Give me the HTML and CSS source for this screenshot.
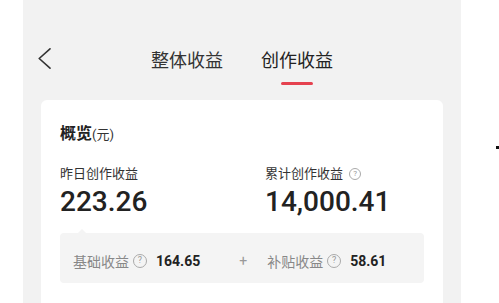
FILE: index.html
```html
<!DOCTYPE html>
<html lang="zh-CN">
<head>
    <meta charset="UTF-8">
    <meta name="viewport" content="width=device-width, initial-scale=1.0">
    <title>创作收益</title>
    <link rel="stylesheet" href="styles.css">
</head>
<body>
    <div class="gutter"></div>

    <div class="panel">
        <!-- 顶部导航 -->
        <div class="topbar">
            <div class="back">
                <svg width="13" height="21" viewBox="0 0 13 21">
                    <polyline points="12,0.8 1.2,10.5 12,20.2" fill="none" stroke="#333" stroke-width="1.6" stroke-linejoin="round" stroke-linecap="round"/>
                </svg>
            </div>
            <div class="tabs">
                <div class="tab">整体收益</div>
                <div class="tab active">创作收益</div>
            </div>
            <div></div>
        </div>

        <div class="card">
            <div class="card-title">概览<span class="unit">(元)</span></div>

            <div class="stats">
                <div class="stat">
                    <div class="stat-label">昨日创作收益</div>
                    <div class="stat-value">223.26</div>
                </div>
                <div class="stat">
                    <div class="stat-label">累计创作收益 <span class="help small">?</span></div>
                    <div class="stat-value">14,000.41</div>
                </div>
            </div>

            <!-- 收益明细 -->
            <div class="detail">
                <span class="detail-label">基础收益</span>
                <span class="help">?</span>
                <span class="detail-value">164.65</span>
                <span class="plus">+</span>
                <span class="detail-label">补贴收益</span>
                <span class="help">?</span>
                <span class="detail-value">58.61</span>
            </div>
        </div>
    </div>

    <div class="aside">
        <div class="dot"></div>
    </div>
</body>
</html>
```

FILE: styles.css
```css
body {
    margin: 0;
    padding: 0;
    background-color: #ffffff;
    font-family: Roboto, "Noto Sans CJK SC", sans-serif;
    color: #222;
    display: flex;
    height: 303px;
    overflow: hidden;
}

.gutter {
    width: 23px;
    flex-shrink: 0;
}

.panel {
    width: 438px;
    flex-shrink: 0;
    height: 303px;
    background-color: #f2f2f2;
    padding: 0 18px;
    box-sizing: border-box;
}

.topbar {
    height: 100px;
    display: grid;
    grid-template-columns: 1fr auto 1fr;
}

.back {
    padding-top: 48px;
    margin-left: -3px;
}

.back svg {
    display: block;
}

.tabs {
    display: flex;
    gap: 38px;
    padding-top: 49px;
}

.tab {
    font-size: 18px;
    line-height: 24px;
    color: #333;
    display: flex;
    flex-direction: column;
    align-items: center;
}

.tab.active {
    color: #222;
}

/* 选中下划线 */
.tab.active::after {
    content: "";
    width: 32px;
    height: 3px;
    border-radius: 2px;
    background-color: #e5424f;
    margin-top: 9px;
}

.card {
    background-color: #ffffff;
    border-radius: 6px 6px 0 0;
    height: 203px;
    padding: 24px 19px 0;
    box-sizing: border-box;
}

.card-title {
    font-size: 16px;
    line-height: 20px;
    font-weight: bold;
    color: #222;
}

.card-title .unit {
    font-size: 13px;
    font-weight: normal;
    color: #333;
}

.stats {
    display: grid;
    grid-template-columns: 205px 1fr;
    margin-top: 20px;
}

.stat-label {
    font-size: 13px;
    line-height: 18px;
    color: #333;
    display: flex;
    align-items: center;
    gap: 4px;
}

.stat-value {
    font-size: 28px;
    line-height: 32px;
    font-weight: 500;
    color: #222;
    margin-top: 3px;
}

.help {
    display: inline-flex;
    align-items: center;
    justify-content: center;
    width: 12px;
    height: 12px;
    border: 1px solid #aaa;
    border-radius: 50%;
    font-size: 9px;
    line-height: 1;
    color: #999;
    margin: 0 9px 0 4px;
}

.help.small {
    width: 10px;
    height: 10px;
    font-size: 8px;
    margin: 0 0 0 2px;
}

.detail {
    position: relative;
    margin-top: 15px;
    height: 50px;
    background-color: #f4f4f4;
    border-radius: 4px;
    display: flex;
    align-items: center;
    padding: 5px 13px 0;
    box-sizing: border-box;
}

/* 小三角 */
.detail::before {
    content: "";
    position: absolute;
    top: -4px;
    left: 18px;
    border-left: 4px solid transparent;
    border-right: 4px solid transparent;
    border-bottom: 4px solid #f4f4f4;
}

.detail-label {
    font-size: 14px;
    color: #888;
}

.detail-value {
    font-size: 14px;
    font-weight: bold;
    color: #222;
}

.plus {
    font-size: 14px;
    color: #999;
    margin: 0 20px 0 39px;
}

.aside {
    flex: 1;
    position: relative;
}

.dot {
    width: 3px;
    height: 3px;
    background-color: #111;
    margin: 146px 0 0 35px;
}
```
